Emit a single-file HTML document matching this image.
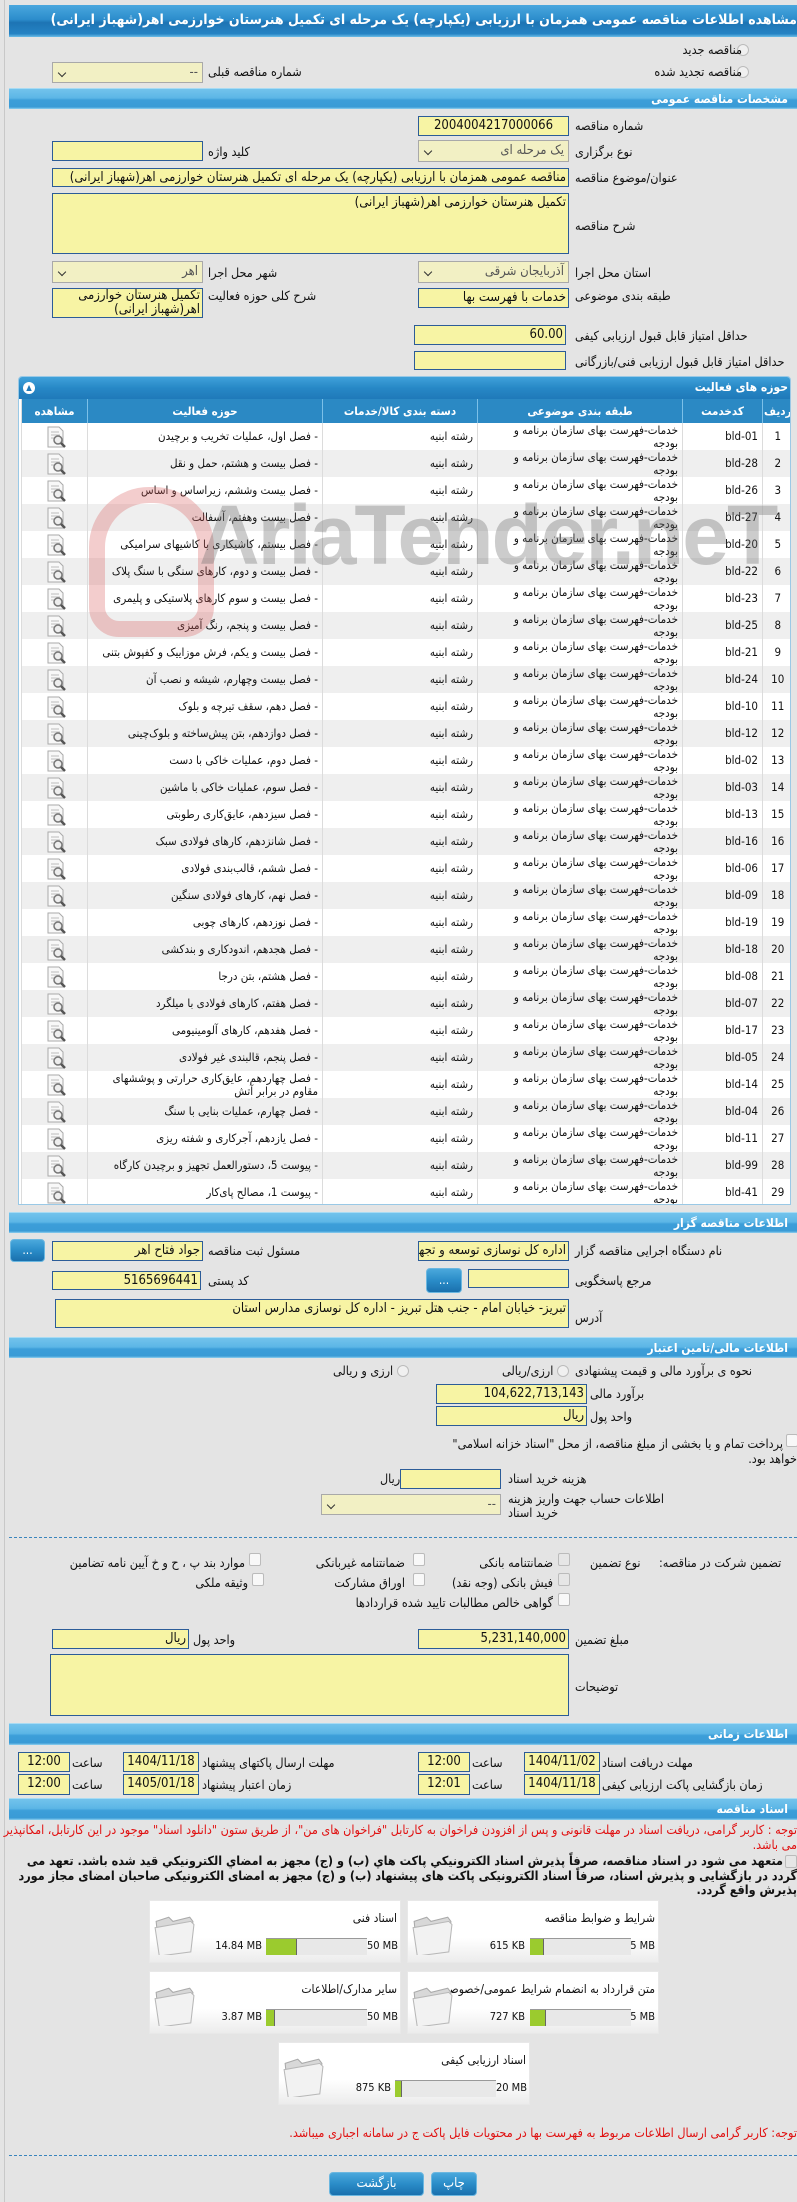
<!DOCTYPE html>
<html><head><meta charset="utf-8">
<style>
*{box-sizing:border-box;margin:0;padding:0}
html,body{width:797px;height:2202px;overflow:hidden}
body{background:#e4e4e4;font-family:"DejaVu Sans Condensed","DejaVu Sans","Liberation Sans",sans-serif;font-size:12px;color:#111;position:relative}
.a{position:absolute}
.l{position:absolute;direction:rtl;white-space:nowrap;font-size:12.5px;line-height:16px}
.inp{position:absolute;background:#f7f4a4;border:1px solid #2c5c98;direction:rtl;text-align:right;font-size:13px;line-height:18px;padding:0 2px;white-space:nowrap;overflow:hidden}
.sel{position:absolute;background:#f2f0c4;border:1px solid #a9a9a9;direction:rtl;text-align:right;font-size:13px;line-height:20px;padding:0 4px;color:#555;white-space:nowrap}
.sel:after{content:"";position:absolute;left:6px;top:7px;width:5px;height:5px;border-right:1.5px solid #333;border-bottom:1.5px solid #333;transform:rotate(45deg)}
.bar{position:absolute;left:9px;right:0;background:linear-gradient(#72c3ec 0%,#5cb6e6 45%,#3c9ed9 55%,#3a9bd6 90%,#8fd0ef 100%);color:#fff;font-weight:bold;direction:rtl;font-size:12px;padding-right:9px;border-top:1px solid #a8dbf3}
.btn{position:absolute;background:linear-gradient(#4aa8dc,#2a8cc8 50%,#1a70ad);border:1px solid #6bb7e0;border-radius:4px;color:#fff;text-align:center}
table{border-collapse:collapse;table-layout:fixed;direction:rtl}
td{height:27px;padding:0 4px;font-size:11.5px;line-height:13px;vertical-align:middle;border-left:1px solid #dcdcdc;text-align:right;white-space:nowrap;overflow:hidden}
tr:nth-child(even) td{background:#efefef}
tr:nth-child(odd) td{background:#fff}
td.c{text-align:center}
.cb{position:absolute;width:12px;height:13px;border:1px solid #bbb;background:#f8f8f8;border-radius:2px}
.rd{position:absolute;width:12px;height:12px;border:1px solid #bbb;background:#f0f0f0;border-radius:50%}
.box{position:absolute;width:252px;height:63px;background:linear-gradient(#fff 0%,#fff 60%,#ececec 100%);border:1px solid #e8e8e8}
.box .t{position:absolute;right:3px;top:10px;direction:rtl;font-size:12px;white-space:nowrap}
.box .pb{position:absolute;top:37px;height:17px;width:101px;background:#e8e8e8;border-top:1px solid #999}
.box .pb i{position:absolute;left:0;top:0;height:16px;background:#9bcb2e;border-right:1px solid #666}
.box .mx,.box .mn{position:absolute;top:38px;font-size:11px;white-space:nowrap;direction:ltr}
.red{color:#e01010}
</style></head><body>
<svg width="0" height="0" style="position:absolute">
<symbol id="ic" viewBox="0 0 24 24"><path d="M4 2h11l4 4v16H4z" fill="#f8f8f8" stroke="#aaa"/><path d="M7 7h8M7 10h9M7 13h6" stroke="#bbb"/><circle cx="14" cy="15" r="4" fill="#eee" stroke="#777" stroke-width="1.5"/><path d="M17 18l4 4" stroke="#555" stroke-width="2.5"/></symbol>
<symbol id="fd" viewBox="0 0 40 40"><path d="M3 8l12-4 4 4 16-4 3 4-2 26-30 4z" fill="#d8d8d8" stroke="#aaa"/><path d="M2 14l34-6 3 3-3 26-30 4z" fill="#f2f2f2" stroke="#b8b8b8"/></symbol>
</svg>
<div class="a" style="left:4px;top:0;width:1px;height:2202px;background:#c8c8c8"></div>

<div class="a" style="left:9px;top:5px;right:0;height:32px;background:linear-gradient(#4aa7de 0%,#2c8dcc 45%,#1d74b4 55%,#2583c4 90%,#6bbde8 100%);color:#fff;font-weight:bold;direction:rtl;font-size:14px;line-height:31px;white-space:nowrap;overflow:hidden">مشاهده اطلاعات مناقصه عمومی همزمان با ارزیابی (یکپارچه) یک مرحله ای تکمیل هنرستان خوارزمی اهر(شهباز ایرانی)</div>

<div class="rd" style="left:737px;top:44px"></div><div class="l" style="right:55px;top:42px">مناقصه جدید</div>
<div class="rd" style="left:737px;top:66px"></div><div class="l" style="right:55px;top:64px">مناقصه تجدید شده</div>
<div class="sel" style="left:52px;top:62px;width:151px;height:21px">--</div><div class="l" style="left:208px;top:64px">شماره مناقصه قبلی</div>

<div class="bar" style="top:88px;height:21px;line-height:20px">مشخصات مناقصه عمومی</div>

<div class="inp" style="left:418px;top:116px;width:151px;height:20px;text-align:center">2004004217000066</div><div class="l" style="left:575px;top:118px">شماره مناقصه</div>
<div class="sel" style="left:418px;top:140px;width:151px;height:22px">یک مرحله ای</div><div class="l" style="left:575px;top:144px">نوع برگزاری</div>
<div class="inp" style="left:52px;top:141px;width:151px;height:20px"></div><div class="l" style="left:208px;top:144px">کلید واژه</div>
<div class="inp" style="left:52px;top:168px;width:517px;height:19px">مناقصه عمومی همزمان با ارزیابی (یکپارچه) یک مرحله ای تکمیل هنرستان خوارزمی اهر(شهباز ایرانی)</div><div class="l" style="left:575px;top:170px">عنوان/موضوع مناقصه</div>
<div class="inp" style="left:52px;top:193px;width:517px;height:61px">تکمیل هنرستان خوارزمی اهر(شهباز ایرانی)</div><div class="l" style="left:575px;top:218px">شرح مناقصه</div>
<div class="sel" style="left:418px;top:261px;width:151px;height:22px">آذربایجان شرقی</div><div class="l" style="left:575px;top:265px">استان محل اجرا</div>
<div class="sel" style="left:52px;top:261px;width:151px;height:22px">اهر</div><div class="l" style="left:208px;top:265px">شهر محل اجرا</div>
<div class="inp" style="left:418px;top:288px;width:151px;height:20px">خدمات با فهرست بها</div><div class="l" style="left:575px;top:288px">طبقه بندی موضوعی</div>
<div class="inp" style="left:52px;top:288px;width:151px;height:30px;white-space:normal;line-height:14px">تکمیل هنرستان خوارزمی اهر(شهباز ایرانی)</div><div class="l" style="left:208px;top:288px">شرح کلی حوزه فعالیت</div>
<div class="inp" style="left:414px;top:325px;width:152px;height:20px">60.00</div><div class="l" style="left:575px;top:328px">حداقل امتیاز قابل قبول ارزیابی کیفی</div>
<div class="inp" style="left:414px;top:351px;width:152px;height:19px"></div><div class="l" style="left:575px;top:354px">حداقل امتیاز قابل قبول ارزیابی فنی/بازرگانی</div>

<div class="a" style="left:18px;top:376px;width:773px;height:829px;background:#fff;border:1px solid #9ac9e6;border-radius:4px 4px 0 0;overflow:hidden">
<div class="a" style="left:0;top:0;width:773px;height:22px;background:linear-gradient(#3fa1da,#2788c6 50%,#1f79b9);color:#fff;font-weight:bold;direction:rtl;padding-right:4px;line-height:21px">حوزه های فعالیت</div>
<div class="a" style="left:4px;top:5px;width:12px;height:12px;border-radius:50%;background:#fff;color:#1f79b9;font-size:8px;line-height:12px;text-align:center">▲</div>
<table class="a" style="left:2px;top:22px;width:771px">
<colgroup><col style="width:30px"><col style="width:80px"><col style="width:205px"><col style="width:155px"><col style="width:235px"><col style="width:66px"></colgroup>
<tr><td class="c" style="height:24px;background:#2b89c4;color:#fff;font-weight:bold;border-left:1px solid #7cc0e8;padding:0">ردیف</td><td class="c" style="background:#2b89c4;color:#fff;font-weight:bold;border-left:1px solid #7cc0e8;height:24px">کدخدمت</td><td class="c" style="background:#2b89c4;color:#fff;font-weight:bold;border-left:1px solid #7cc0e8;height:24px">طبقه بندی موضوعی</td><td class="c" style="background:#2b89c4;color:#fff;font-weight:bold;border-left:1px solid #7cc0e8;height:24px">دسته بندی کالا/خدمات</td><td class="c" style="background:#2b89c4;color:#fff;font-weight:bold;border-left:1px solid #7cc0e8;height:24px">حوزه فعالیت</td><td class="c" style="background:#2b89c4;color:#fff;font-weight:bold;height:24px">مشاهده</td></tr>
</table>
<table class="a" style="left:2px;top:46px;width:771px">
<colgroup><col style="width:30px"><col style="width:80px"><col style="width:205px"><col style="width:155px"><col style="width:235px"><col style="width:66px"></colgroup>
<tr><td class="c">1</td><td>bld-01</td><td>خدمات-فهرست بهای سازمان برنامه و<br>بودجه</td><td>رشته ابنیه</td><td>- فصل اول، عملیات تخریب و برچیدن</td><td><svg width="24" height="24" style="float:left;margin-left:18px"><use href="#ic"/></svg></td></tr>
<tr><td class="c">2</td><td>bld-28</td><td>خدمات-فهرست بهای سازمان برنامه و<br>بودجه</td><td>رشته ابنیه</td><td>- فصل بیست و هشتم، حمل و نقل</td><td><svg width="24" height="24" style="float:left;margin-left:18px"><use href="#ic"/></svg></td></tr>
<tr><td class="c">3</td><td>bld-26</td><td>خدمات-فهرست بهای سازمان برنامه و<br>بودجه</td><td>رشته ابنیه</td><td>- فصل بیست وششم، زیراساس و اساس</td><td><svg width="24" height="24" style="float:left;margin-left:18px"><use href="#ic"/></svg></td></tr>
<tr><td class="c">4</td><td>bld-27</td><td>خدمات-فهرست بهای سازمان برنامه و<br>بودجه</td><td>رشته ابنیه</td><td>- فصل بیست وهفتم، آسفالت</td><td><svg width="24" height="24" style="float:left;margin-left:18px"><use href="#ic"/></svg></td></tr>
<tr><td class="c">5</td><td>bld-20</td><td>خدمات-فهرست بهای سازمان برنامه و<br>بودجه</td><td>رشته ابنیه</td><td>- فصل بیستم، کاشیکاری با کاشیهای سرامیکی</td><td><svg width="24" height="24" style="float:left;margin-left:18px"><use href="#ic"/></svg></td></tr>
<tr><td class="c">6</td><td>bld-22</td><td>خدمات-فهرست بهای سازمان برنامه و<br>بودجه</td><td>رشته ابنیه</td><td>- فصل بیست و دوم، کارهای سنگی با سنگ پلاک</td><td><svg width="24" height="24" style="float:left;margin-left:18px"><use href="#ic"/></svg></td></tr>
<tr><td class="c">7</td><td>bld-23</td><td>خدمات-فهرست بهای سازمان برنامه و<br>بودجه</td><td>رشته ابنیه</td><td>- فصل بیست و سوم کارهای پلاستیکی و پلیمری</td><td><svg width="24" height="24" style="float:left;margin-left:18px"><use href="#ic"/></svg></td></tr>
<tr><td class="c">8</td><td>bld-25</td><td>خدمات-فهرست بهای سازمان برنامه و<br>بودجه</td><td>رشته ابنیه</td><td>- فصل بیست و پنجم، رنگ آمیزی</td><td><svg width="24" height="24" style="float:left;margin-left:18px"><use href="#ic"/></svg></td></tr>
<tr><td class="c">9</td><td>bld-21</td><td>خدمات-فهرست بهای سازمان برنامه و<br>بودجه</td><td>رشته ابنیه</td><td>- فصل بیست و یکم، فرش موزاییک و کفپوش بتنی</td><td><svg width="24" height="24" style="float:left;margin-left:18px"><use href="#ic"/></svg></td></tr>
<tr><td class="c">10</td><td>bld-24</td><td>خدمات-فهرست بهای سازمان برنامه و<br>بودجه</td><td>رشته ابنیه</td><td>- فصل بیست وچهارم، شیشه و نصب آن</td><td><svg width="24" height="24" style="float:left;margin-left:18px"><use href="#ic"/></svg></td></tr>
<tr><td class="c">11</td><td>bld-10</td><td>خدمات-فهرست بهای سازمان برنامه و<br>بودجه</td><td>رشته ابنیه</td><td>- فصل دهم، سقف تیرچه و بلوک</td><td><svg width="24" height="24" style="float:left;margin-left:18px"><use href="#ic"/></svg></td></tr>
<tr><td class="c">12</td><td>bld-12</td><td>خدمات-فهرست بهای سازمان برنامه و<br>بودجه</td><td>رشته ابنیه</td><td>- فصل دوازدهم، بتن پیش‌ساخته و بلوک‌چینی</td><td><svg width="24" height="24" style="float:left;margin-left:18px"><use href="#ic"/></svg></td></tr>
<tr><td class="c">13</td><td>bld-02</td><td>خدمات-فهرست بهای سازمان برنامه و<br>بودجه</td><td>رشته ابنیه</td><td>- فصل دوم، عملیات خاکی با دست</td><td><svg width="24" height="24" style="float:left;margin-left:18px"><use href="#ic"/></svg></td></tr>
<tr><td class="c">14</td><td>bld-03</td><td>خدمات-فهرست بهای سازمان برنامه و<br>بودجه</td><td>رشته ابنیه</td><td>- فصل سوم، عملیات خاکی با ماشین</td><td><svg width="24" height="24" style="float:left;margin-left:18px"><use href="#ic"/></svg></td></tr>
<tr><td class="c">15</td><td>bld-13</td><td>خدمات-فهرست بهای سازمان برنامه و<br>بودجه</td><td>رشته ابنیه</td><td>- فصل سیزدهم، عایق‌کاری رطوبتی</td><td><svg width="24" height="24" style="float:left;margin-left:18px"><use href="#ic"/></svg></td></tr>
<tr><td class="c">16</td><td>bld-16</td><td>خدمات-فهرست بهای سازمان برنامه و<br>بودجه</td><td>رشته ابنیه</td><td>- فصل شانزدهم، کارهای فولادی سبک</td><td><svg width="24" height="24" style="float:left;margin-left:18px"><use href="#ic"/></svg></td></tr>
<tr><td class="c">17</td><td>bld-06</td><td>خدمات-فهرست بهای سازمان برنامه و<br>بودجه</td><td>رشته ابنیه</td><td>- فصل ششم، قالب‌بندی فولادی</td><td><svg width="24" height="24" style="float:left;margin-left:18px"><use href="#ic"/></svg></td></tr>
<tr><td class="c">18</td><td>bld-09</td><td>خدمات-فهرست بهای سازمان برنامه و<br>بودجه</td><td>رشته ابنیه</td><td>- فصل نهم، کارهای فولادی سنگین</td><td><svg width="24" height="24" style="float:left;margin-left:18px"><use href="#ic"/></svg></td></tr>
<tr><td class="c">19</td><td>bld-19</td><td>خدمات-فهرست بهای سازمان برنامه و<br>بودجه</td><td>رشته ابنیه</td><td>- فصل نوزدهم، کارهای چوبی</td><td><svg width="24" height="24" style="float:left;margin-left:18px"><use href="#ic"/></svg></td></tr>
<tr><td class="c">20</td><td>bld-18</td><td>خدمات-فهرست بهای سازمان برنامه و<br>بودجه</td><td>رشته ابنیه</td><td>- فصل هجدهم، اندودکاری و بندکشی</td><td><svg width="24" height="24" style="float:left;margin-left:18px"><use href="#ic"/></svg></td></tr>
<tr><td class="c">21</td><td>bld-08</td><td>خدمات-فهرست بهای سازمان برنامه و<br>بودجه</td><td>رشته ابنیه</td><td>- فصل هشتم، بتن درجا</td><td><svg width="24" height="24" style="float:left;margin-left:18px"><use href="#ic"/></svg></td></tr>
<tr><td class="c">22</td><td>bld-07</td><td>خدمات-فهرست بهای سازمان برنامه و<br>بودجه</td><td>رشته ابنیه</td><td>- فصل هفتم، کارهای فولادی با میلگرد</td><td><svg width="24" height="24" style="float:left;margin-left:18px"><use href="#ic"/></svg></td></tr>
<tr><td class="c">23</td><td>bld-17</td><td>خدمات-فهرست بهای سازمان برنامه و<br>بودجه</td><td>رشته ابنیه</td><td>- فصل هفدهم، کارهای آلومینیومی</td><td><svg width="24" height="24" style="float:left;margin-left:18px"><use href="#ic"/></svg></td></tr>
<tr><td class="c">24</td><td>bld-05</td><td>خدمات-فهرست بهای سازمان برنامه و<br>بودجه</td><td>رشته ابنیه</td><td>- فصل پنجم، قالبندی غیر فولادی</td><td><svg width="24" height="24" style="float:left;margin-left:18px"><use href="#ic"/></svg></td></tr>
<tr><td class="c">25</td><td>bld-14</td><td>خدمات-فهرست بهای سازمان برنامه و<br>بودجه</td><td>رشته ابنیه</td><td>- فصل چهاردهم، عایق‌کاری حرارتی و پوششهای<br>مقاوم در برابر آتش</td><td><svg width="24" height="24" style="float:left;margin-left:18px"><use href="#ic"/></svg></td></tr>
<tr><td class="c">26</td><td>bld-04</td><td>خدمات-فهرست بهای سازمان برنامه و<br>بودجه</td><td>رشته ابنیه</td><td>- فصل چهارم، عملیات بنایی با سنگ</td><td><svg width="24" height="24" style="float:left;margin-left:18px"><use href="#ic"/></svg></td></tr>
<tr><td class="c">27</td><td>bld-11</td><td>خدمات-فهرست بهای سازمان برنامه و<br>بودجه</td><td>رشته ابنیه</td><td>- فصل یازدهم، آجرکاری و شفته ریزی</td><td><svg width="24" height="24" style="float:left;margin-left:18px"><use href="#ic"/></svg></td></tr>
<tr><td class="c">28</td><td>bld-99</td><td>خدمات-فهرست بهای سازمان برنامه و<br>بودجه</td><td>رشته ابنیه</td><td>- پیوست 5، دستورالعمل تجهیز و برچیدن کارگاه</td><td><svg width="24" height="24" style="float:left;margin-left:18px"><use href="#ic"/></svg></td></tr>
<tr><td class="c">29</td><td>bld-41</td><td>خدمات-فهرست بهای سازمان برنامه و<br>بودجه</td><td>رشته ابنیه</td><td>- پیوست 1، مصالح پای‌کار</td><td><svg width="24" height="24" style="float:left;margin-left:18px"><use href="#ic"/></svg></td></tr>
</table>
<div class="a" style="left:70px;top:110px;width:125px;height:150px;border:16px solid rgba(215,90,90,0.3);border-radius:60px 60px 30px 30px"></div>
<div class="a" style="left:180px;top:110px;font-size:84px;font-weight:bold;color:rgba(110,110,110,0.35);font-family:'Liberation Sans',sans-serif;letter-spacing:-2px;white-space:nowrap">AriaTender.neT</div>
</div>

<div class="bar" style="top:1212px;height:21px;line-height:20px">اطلاعات مناقصه گزار</div>
<div class="btn" style="left:10px;top:1239px;width:35px;height:23px;line-height:20px">...</div>
<div class="inp" style="left:52px;top:1241px;width:151px;height:20px">جواد فتاح اهر</div><div class="l" style="left:208px;top:1243px">مسئول ثبت مناقصه</div>
<div class="inp" style="left:418px;top:1241px;width:151px;height:20px">اداره کل نوسازی  توسعه و تجهیز</div><div class="l" style="left:575px;top:1243px">نام دستگاه اجرایی مناقصه گزار</div>
<div class="inp" style="left:52px;top:1271px;width:149px;height:19px">5165696441</div><div class="l" style="left:208px;top:1273px">کد پستی</div>
<div class="btn" style="left:426px;top:1268px;width:36px;height:25px;line-height:22px">...</div>
<div class="inp" style="left:468px;top:1269px;width:101px;height:19px"></div><div class="l" style="left:575px;top:1273px">مرجع پاسخگویی</div>
<div class="inp" style="left:55px;top:1299px;width:514px;height:29px">تبریز- خیابان امام - جنب هتل تبریز - اداره کل نوسازی مدارس استان</div><div class="l" style="left:575px;top:1310px">آدرس</div>

<div class="bar" style="top:1337px;height:21px;line-height:20px">اطلاعات مالی/تامین اعتبار</div>
<div class="l" style="left:575px;top:1363px">نحوه ی برآورد مالی و قیمت پیشنهادی</div>
<div class="rd" style="left:557px;top:1365px"></div><div class="l" style="left:502px;top:1363px">ارزی/ریالی</div>
<div class="rd" style="left:397px;top:1365px"></div><div class="l" style="left:333px;top:1363px">ارزی و ریالی</div>
<div class="inp" style="left:436px;top:1384px;width:151px;height:20px">104,622,713,143</div><div class="l" style="left:590px;top:1386px">برآورد مالی</div>
<div class="inp" style="left:436px;top:1406px;width:151px;height:20px">ریال</div><div class="l" style="left:590px;top:1409px">واحد پول</div>
<div class="cb" style="left:786px;top:1434px"></div>
<div class="l" style="right:14px;top:1436px">پرداخت تمام و یا بخشی از مبلغ مناقصه، از محل "اسناد خزانه اسلامی"</div>
<div class="l" style="right:0;top:1451px">خواهد بود.</div>
<div class="inp" style="left:400px;top:1469px;width:101px;height:20px"></div><div class="l" style="left:380px;top:1471px">ریال</div><div class="l" style="left:508px;top:1471px">هزینه خرید اسناد</div>
<div class="sel" style="left:321px;top:1494px;width:180px;height:21px">--</div>
<div class="l" style="left:508px;top:1491px">اطلاعات حساب جهت واریز هزینه</div><div class="l" style="left:508px;top:1505px">خرید اسناد</div>
<div class="a" style="left:9px;right:0;top:1537px;border-top:1px dashed #3a85bd"></div>

<div class="l" style="left:659px;top:1555px">تضمین شرکت در مناقصه:</div>
<div class="l" style="left:590px;top:1555px">نوع تضمین</div>
<div class="cb" style="left:558px;top:1553px;background:#e6e6e6"></div><div class="l" style="right:244px;top:1555px">ضمانتنامه بانکی</div>
<div class="cb" style="left:558px;top:1573px;background:#e6e6e6"></div><div class="l" style="right:244px;top:1575px">فیش بانکی (وجه نقد)</div>
<div class="cb" style="left:558px;top:1593px"></div><div class="l" style="right:244px;top:1595px">گواهی خالص مطالبات تایید شده قراردادها</div>
<div class="cb" style="left:413px;top:1553px"></div><div class="l" style="right:392px;top:1555px">ضمانتنامه غیربانکی</div>
<div class="cb" style="left:413px;top:1573px"></div><div class="l" style="right:392px;top:1575px">اوراق مشارکت</div>
<div class="cb" style="left:249px;top:1553px"></div><div class="l" style="right:552px;top:1555px">موارد بند پ ، ح و خ آیین نامه تضامین</div>
<div class="cb" style="left:252px;top:1573px"></div><div class="l" style="right:549px;top:1575px">وثیقه ملکی</div>

<div class="inp" style="left:418px;top:1629px;width:151px;height:20px">5,231,140,000</div><div class="l" style="left:575px;top:1632px">مبلغ تضمین</div>
<div class="inp" style="left:52px;top:1629px;width:137px;height:20px">ریال</div><div class="l" style="left:193px;top:1632px">واحد پول</div>
<div class="inp" style="left:50px;top:1654px;width:519px;height:62px"></div><div class="l" style="left:575px;top:1679px">توضیحات</div>

<div class="bar" style="top:1723px;height:22px;line-height:21px">اطلاعات زمانی</div>
<div class="inp" style="left:524px;top:1752px;width:76px;height:20px;text-align:center;padding:0">1404/11/02</div><div class="l" style="left:602px;top:1755px">مهلت دریافت اسناد</div>
<div class="inp" style="left:418px;top:1752px;width:52px;height:20px;text-align:center">12:00</div><div class="l" style="left:472px;top:1755px">ساعت</div>
<div class="inp" style="left:123px;top:1752px;width:76px;height:20px;text-align:center;padding:0">1404/11/18</div><div class="l" style="left:202px;top:1755px">مهلت ارسال پاکتهای پیشنهاد</div>
<div class="inp" style="left:18px;top:1752px;width:52px;height:20px;text-align:center">12:00</div><div class="l" style="left:72px;top:1755px">ساعت</div>
<div class="inp" style="left:524px;top:1774px;width:76px;height:21px;text-align:center;padding:0">1404/11/18</div><div class="l" style="left:602px;top:1777px">زمان بازگشایی پاکت ارزیابی کیفی</div>
<div class="inp" style="left:418px;top:1774px;width:52px;height:21px;text-align:center">12:01</div><div class="l" style="left:472px;top:1777px">ساعت</div>
<div class="inp" style="left:123px;top:1774px;width:76px;height:21px;text-align:center;padding:0">1405/01/18</div><div class="l" style="left:202px;top:1777px">زمان اعتبار پیشنهاد</div>
<div class="inp" style="left:18px;top:1774px;width:52px;height:21px;text-align:center">12:00</div><div class="l" style="left:72px;top:1777px">ساعت</div>

<div class="bar" style="top:1798px;height:22px;line-height:21px">اسناد مناقصه</div>
<div class="a red" style="left:0;right:0;top:1822px;direction:rtl;font-size:12.5px;line-height:15px">توجه : کاربر گرامی، دریافت اسناد در مهلت قانونی و پس از افزودن فراخوان به کارتابل "فراخوان های من"، از طریق ستون "دانلود اسناد" موجود در این کارتابل، امکانپذیر می باشد.</div>
<div class="cb" style="left:785px;top:1855px;background:#e6e6e6"></div>
<div class="a" style="left:0;right:0;top:1854px;direction:rtl;font-size:12.5px;line-height:14.5px;font-weight:bold;text-indent:14px">متعهد می شود در اسناد مناقصه، صرفاً پذیرش اسناد الکترونیکي پاکت هاي (ب) و (ج) مجهز به امضاي الکترونيکي قيد شده باشد. تعهد می گردد در بازگشایی و پذیرش اسناد، صرفاً اسناد الکترونیکی پاکت های پیشنهاد (ب) و (ج) مجهز به امضای الکترونیکی صاحبان امضای مجاز مورد پذیرش واقع گردد.</div>

<div class="box" style="left:407px;top:1900px"><div class="t">شرایط و ضوابط مناقصه</div><svg class="a" style="left:3px;top:12px" width="42" height="42"><use href="#fd"/></svg><div class="mx" style="right:3px">5 MB</div><div class="pb" style="left:122px"><i style="width:14px"></i></div><div class="mn" style="right:133px">615 KB</div></div>
<div class="box" style="left:149px;top:1900px"><div class="t">اسناد فنی</div><svg class="a" style="left:3px;top:12px" width="42" height="42"><use href="#fd"/></svg><div class="mx" style="right:2px">50 MB</div><div class="pb" style="left:116px"><i style="width:31px"></i></div><div class="mn" style="right:138px">14.84 MB</div></div>
<div class="box" style="left:407px;top:1971px"><div class="t">متن قرارداد به انضمام شرایط عمومی/خصوصی</div><svg class="a" style="left:3px;top:12px" width="42" height="42"><use href="#fd"/></svg><div class="mx" style="right:3px">5 MB</div><div class="pb" style="left:122px"><i style="width:16px"></i></div><div class="mn" style="right:133px">727 KB</div></div>
<div class="box" style="left:149px;top:1971px"><div class="t">سایر مدارک/اطلاعات</div><svg class="a" style="left:3px;top:12px" width="42" height="42"><use href="#fd"/></svg><div class="mx" style="right:2px">50 MB</div><div class="pb" style="left:116px"><i style="width:9px"></i></div><div class="mn" style="right:138px">3.87 MB</div></div>
<div class="box" style="left:278px;top:2042px"><div class="t">اسناد ارزیابی کیفی</div><svg class="a" style="left:3px;top:12px" width="42" height="42"><use href="#fd"/></svg><div class="mx" style="right:2px">20 MB</div><div class="pb" style="left:116px"><i style="width:7px"></i></div><div class="mn" style="right:138px">875 KB</div></div>

<div class="a red" style="right:0;top:2125px;direction:rtl;font-size:12.5px;white-space:nowrap">توجه: کاربر گرامی ارسال اطلاعات مربوط به فهرست بها در محتویات فایل پاکت ج در سامانه اجباری میباشد.</div>
<div class="a" style="left:9px;right:0;top:2155px;border-top:1px dashed #3a85bd"></div>
<div class="btn" style="left:329px;top:2172px;width:95px;height:24px;line-height:22px;font-size:13px">بازگشت</div>
<div class="btn" style="left:431px;top:2172px;width:46px;height:24px;line-height:22px;font-size:13px">چاپ</div>
</body></html>
